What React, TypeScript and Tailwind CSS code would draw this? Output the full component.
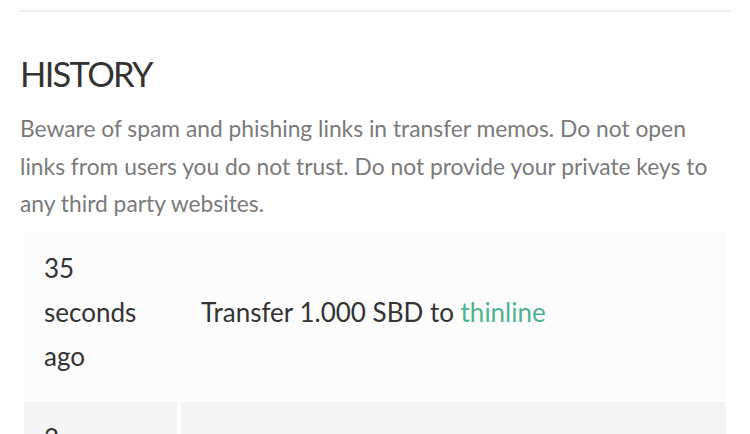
import React from "react";

export default function App() {
  return (
    <div className="w-[750px] h-[434px] overflow-hidden bg-white" style={{ fontFamily: "Lato, 'Liberation Sans', sans-serif" }}>
      <div className="px-5 pt-[10px]">
        <div className="h-[2px] bg-[#eeeeee]" />
        <h2 className="mt-[40px] text-[34.5px] leading-[44px] tracking-[-1.7px] text-[#333333] font-normal">HISTORY</h2>
        <p className="mt-[14px] text-[22.8px] leading-[37.5px] text-[#7a7a7a]">
          Beware of spam and phishing links in transfer memos. Do not open links from users you do not trust. Do not provide your private keys to any third party websites.
        </p>
      </div>
      <div className="ml-6 w-[702px] mt-[9px] flex flex-col gap-[2px] text-[26px] leading-[44px] text-[#333333]">
        <div className="flex bg-[#fcfcfc]">
          <div className="w-[153px] shrink-0 pl-5 pr-[30px] pt-[14px] pb-[22px]">35 seconds ago</div>
          <div className="flex-1 flex items-center pl-5 ml-[4px] pb-[8px]">
            <span>
              Transfer 1.000 SBD to <a className="text-[#4fb38f]">thinline</a>
            </span>
          </div>
        </div>
        <div className="flex gap-[4px]">
          <div className="w-[153px] shrink-0 bg-[#f4f4f4] pl-5 pr-[30px] pt-[14px] pb-[22px]">2 minutes ago</div>
          <div className="flex-1 flex items-center bg-[#f4f4f4] pl-5 pb-[8px]">
            <span>
              Transfer 1.000 SBD to <a className="text-[#4fb38f]">thinline</a>
            </span>
          </div>
        </div>
      </div>
    </div>
  );
}
